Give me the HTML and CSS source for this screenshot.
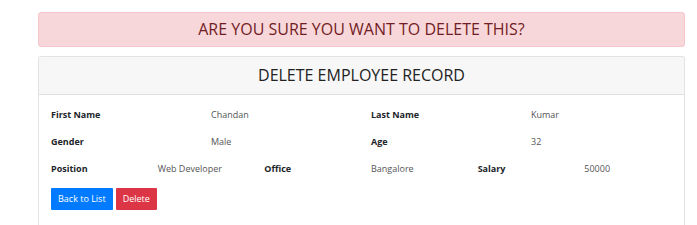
FILE: index.html
```html
<!DOCTYPE html>
<html lang="en">
<head>
    <meta charset="UTF-8">
    <title>Delete Employee</title>
    <link rel="stylesheet" href="styles.css">
</head>
<body>
    <div class="page">
        <div class="alert">ARE YOU SURE YOU WANT TO DELETE THIS?</div>

        <div class="card">
            <div class="card-header">DELETE EMPLOYEE RECORD</div>
            <div class="card-body">
                <div class="row four">
                    <div class="label">First Name</div>
                    <div class="value">Chandan</div>
                    <div class="label">Last Name</div>
                    <div class="value">Kumar</div>
                </div>
                <div class="row four">
                    <div class="label">Gender</div>
                    <div class="value">Male</div>
                    <div class="label">Age</div>
                    <div class="value">32</div>
                </div>
                <div class="row six">
                    <div class="label">Position</div>
                    <div class="value">Web Developer</div>
                    <div class="label">Office</div>
                    <div class="value">Bangalore</div>
                    <div class="label">Salary</div>
                    <div class="value">50000</div>
                </div>
                <div class="actions">
                    <a href="#" class="btn btn-primary">Back to List</a>
                    <a href="#" class="btn btn-danger">Delete</a>
                </div>
            </div>
        </div>
    </div>
</body>
</html>
```

FILE: styles.css
```css
body {
    margin: 0;
    font-family: "Open Sans", "Noto Sans", sans-serif;
    background: #fff;
    color: #212529;
}

.page {
    width: 647px;
    margin-left: 38px;
    padding-top: 12px;
}

.alert {
    background: #f8d7da;
    border: 1px solid #f5c6cb;
    border-radius: 3px;
    color: #721c24;
    font-size: 16px;
    text-align: center;
    height: 33px;
    line-height: 33px;
}

.card {
    margin-top: 9px;
    border: 1px solid #e3e3e3;
    border-bottom: 0;
    border-radius: 3px 3px 0 0;
    height: 168px;
    overflow: hidden;
}

.card-header {
    background: #f7f7f7;
    border-bottom: 1px solid #e0e0e0;
    height: 37px;
    line-height: 37px;
    text-align: center;
    font-size: 16px;
    color: #222;
}

.card-body {
    padding: 6px 12px 0;
    font-size: 9px;
}

.row {
    display: grid;
    width: 640px;
    height: 27px;
    align-items: center;
}

.row.four {
    grid-template-columns: repeat(4, 1fr);
}

.row.six {
    grid-template-columns: repeat(6, 1fr);
}

.label {
    font-weight: bold;
    color: #212529;
}

.value {
    color: #555;
}

.actions {
    display: flex;
    gap: 3px;
    margin-top: 6px;
}

.btn {
    display: inline-block;
    height: 22px;
    line-height: 22px;
    padding: 0 7px;
    color: #fff;
    text-decoration: none;
    font-size: 9px;
    border-radius: 1px;
}

.btn-primary {
    background: #007bff;
}

.btn-danger {
    background: #dc3545;
}
```
